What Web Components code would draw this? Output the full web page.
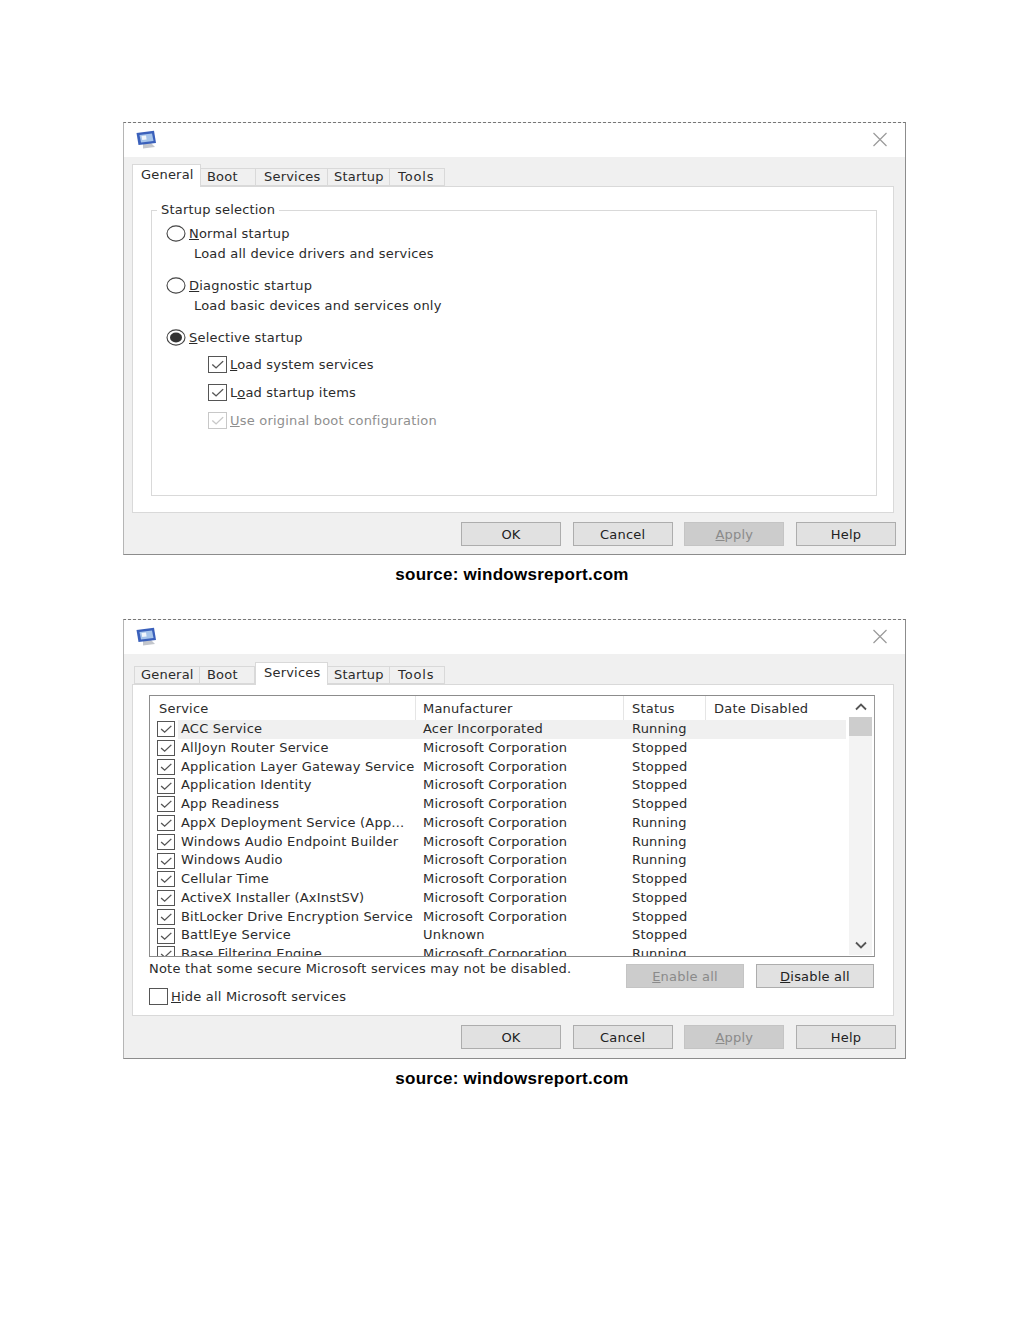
<!DOCTYPE html>
<html>
<head>
<meta charset="utf-8">
<title>System Configuration</title>
<style>
  html, body { margin: 0; background: #fff; }
  body { font-family: 'DejaVu Sans', sans-serif; font-size: 13px; letter-spacing: .2px; color: #2b2b2b; }
</style>
</head>
<body>
<config-page>
  <config-dialog active="General" style="--panel-h: 327px; --tabs-top: 7px;">
    <general-panel></general-panel>
  </config-dialog>
  <source-note></source-note>
  <config-dialog active="Services" style="--panel-h: 332px; --tabs-top: 8px; --foot-pad: 9px 9px 9px; --tabs-pad: 0 0 0 2px;">
    <services-panel></services-panel>
  </config-dialog>
  <source-note></source-note>
</config-page>

<script>
const CHECK_MARK = '<path d="M3.5 9 L7.5 13 L15 5" fill="none" stroke="currentColor" stroke-width="1.5"/>';

class ConfigPage extends HTMLElement {
  constructor() {
    super();
    this.attachShadow({ mode: 'open' });
    this.shadowRoot.innerHTML = `
      <style>
        :host { display: block; width: 1024px; height: 1325px; padding: 122px 118px 0 123px; box-sizing: border-box; }
      </style>
      <slot></slot>
    `;
  }
}

class SourceNote extends HTMLElement {
  constructor() {
    super();
    this.attachShadow({ mode: 'open' });
    this.shadowRoot.innerHTML = `
      <style>
        :host {
          display: block;
          height: 64px;
          padding-top: 10px;
          box-sizing: border-box;
          text-align: center;
          font: bold 17px/20px 'Liberation Sans', Arial, sans-serif;
          letter-spacing: .27px;
          color: #000;
          margin-right: 5px;
        }
      </style>
      source: windowsreport.com
    `;
  }
}

class ConfigDialog extends HTMLElement {
  constructor() {
    super();
    this.attachShadow({ mode: 'open' });
    const active = this.getAttribute('active');
    const tabs = ['General', 'Boot', 'Services', 'Startup', 'Tools'].map(name =>
      `<div class="tab tab-${name} ${name === active ? 'on' : ''}">${name}</div>`).join('');
    this.shadowRoot.innerHTML = `
      <style>
        :host {
          display: block;
          background: #f0f0f0;
          border: 1px solid #8c8c8c;
          border-left-color: #b5b5b5;
          border-top: 1px dashed #777;
          box-sizing: border-box;
          width: 783px;
        }
        .title {
          height: 34px;
          background: #fff;
          display: flex;
          align-items: center;
          justify-content: space-between;
          padding: 0 17px 1px 11px;
          box-sizing: border-box;
        }
        .tabs {
          display: flex;
          align-items: flex-end;
          height: 22px;
          margin-top: var(--tabs-top, 8px);
          padding: var(--tabs-pad, 0);
          margin-left: 8px;
          position: relative;
          z-index: 1;
        }
        .tab {
          height: 18px;
          line-height: 16px;
          box-sizing: border-box;
          background: #f0f0f0;
          border: 1px solid #d9d9d9;
          border-left: 0;
          border-bottom-color: #d9d9d9;
          padding-left: 7px;
          white-space: nowrap;
        }
        .tab-General { width: 66px; border-left: 1px solid #d9d9d9; padding-left: 6px; }
        .tab-Boot { width: 55px; }
        .on + .tab-Boot { padding-left: 6px; }
        .tab-Services { width: 72px; padding-left: 8px; }
        .tab-Startup { width: 62px; padding-left: 6px; }
        .tab-Tools { width: 55px; padding-left: 8px; letter-spacing: .9px; }
        .tab.on {
          height: 23px;
          margin-bottom: -1px;
          line-height: 19px;
          background: #fff;
          border-bottom: 0;
          border-top: 1px solid #d9d9d9;
          border-left: 1px solid #d9d9d9;
        }
        .tab-General.on { width: 69px; padding-left: 8px; }
        .tab-Services.on { width: 73px; }
        .panel {
          margin: 0 11px 0 8px;
          height: var(--panel-h);
          background: #fff;
          border: 1px solid #d9d9d9;
          box-sizing: border-box;
        }
        .foot {
          display: flex;
          justify-content: flex-end;
          gap: 11.67px;
          padding: var(--foot-pad, 9px 9px 8px);
          --btn-w: 100px;
        }
      </style>
      <div class="title">
        <svg width="23" height="19" viewBox="0 0 23 19">
          <path d="M8 14 L16 13 L20 17 L8 18.5 Z" fill="#c3c6cc"/>
          <path d="M1.5 3 L19 0.8 L21 13 L3.5 15 Z" fill="#3a60bb"/>
          <path d="M4.5 5 L17 3.4 L18.5 11 L6 12.6 Z" fill="#a6c4ea"/>
          <path d="M6.5 6 L11 5.4 L11.6 9.4 L7.2 10 Z" fill="#f0f5fb"/>
        </svg>
        <svg width="16" height="15" viewBox="0 0 16 15">
          <path d="M1.5 1 L14.5 14 M14.5 1 L1.5 14" stroke="#9a9a9a" stroke-width="1.2" fill="none"/>
        </svg>
      </div>
      <div class="tabs">${tabs}</div>
      <div class="panel"><slot></slot></div>
      <div class="foot">
        <push-btn>OK</push-btn>
        <push-btn>Cancel</push-btn>
        <push-btn disabled><u>A</u>pply</push-btn>
        <push-btn>Help</push-btn>
      </div>
    `;
  }
}

class PushBtn extends HTMLElement {
  constructor() {
    super();
    this.attachShadow({ mode: 'open' });
    this.shadowRoot.innerHTML = `
      <style>
        :host {
          display: block;
          width: var(--btn-w, 101px);
          height: 24px;
          box-sizing: border-box;
          background: #e1e1e1;
          border: 1px solid #adadad;
          text-align: center;
          line-height: 24px;
          color: #222;
        }
        :host([disabled]) {
          background: #cccccc;
          border-color: #c4c4c4;
          color: #8a8a8a;
        }
      </style>
      <slot></slot>
    `;
  }
}

class TickBox extends HTMLElement {
  constructor() {
    super();
    this.attachShadow({ mode: 'open' });
    this.shadowRoot.innerHTML = `
      <style>
        :host {
          display: block;
          flex: none;
          width: 19px;
          height: 17px;
          box-sizing: border-box;
          border: 1px solid #555;
          color: #555;
          background: #fff;
        }
        :host([disabled]) { border-color: #c8c8c8; color: #c8c8c8; }
        svg { display: block; width: 100%; height: 100%; }
      </style>
      <svg viewBox="0 0 18 18" preserveAspectRatio="none">
        ${this.hasAttribute('off') ? '' : CHECK_MARK}
      </svg>
    `;
  }
}

class OptionRow extends HTMLElement {
  constructor() {
    super();
    this.attachShadow({ mode: 'open' });
    const kind = this.getAttribute('kind');
    const off = this.hasAttribute('off') ? 'off' : '';
    const disabled = this.hasAttribute('disabled') ? 'disabled' : '';
    let mark = `<tick-box ${off} ${disabled}></tick-box>`;
    if (kind === 'radio') {
      mark = `<svg width="20" height="17" viewBox="0 0 20 17">
        <ellipse cx="10" cy="8.5" rx="9" ry="7.6" fill="#fff" stroke="#444" stroke-width="1.1"/>
        ${this.hasAttribute('selected') ? '<ellipse cx="10" cy="8.5" rx="6" ry="5" fill="#333"/>' : ''}
      </svg>`;
    }
    this.shadowRoot.innerHTML = `
      <style>
        :host { display: flex; align-items: center; gap: 3px; height: 18px; white-space: nowrap; }
        :host([disabled]) { color: #8f8f8f; }
        svg { flex: none; }
      </style>
      ${mark}
      <span><slot></slot></span>
    `;
  }
}

class GeneralPanel extends HTMLElement {
  constructor() {
    super();
    this.attachShadow({ mode: 'open' });
    this.shadowRoot.innerHTML = `
      <style>
        :host { display: block; padding: 23px 16px 0 18px; }
        .group {
          position: relative;
          height: 286px;
          box-sizing: border-box;
          border: 1px solid #d9d9d9;
          padding: 13px 0 0 14px;
        }
        .legend {
          position: absolute;
          top: -9px;
          left: 5px;
          padding: 0 4px;
          line-height: 16px;
          background: #fff;
        }
        .desc { margin: 3px 0 0 28px; height: 18px; line-height: 18px; }
        .sub { margin-left: 42px; display: flex; flex-direction: column; gap: 10px; margin-top: 9px; }
        .next { margin-top: 13px; }
      </style>
      <div class="group">
        <div class="legend">Startup selection</div>
        <option-row kind="radio"><u>N</u>ormal startup</option-row>
        <div class="desc">Load all device drivers and services</div>
        <option-row class="next" kind="radio"><u>D</u>iagnostic startup</option-row>
        <div class="desc">Load basic devices and services only</div>
        <option-row class="next" kind="radio" selected><u>S</u>elective startup</option-row>
        <div class="sub">
          <option-row><u>L</u>oad system services</option-row>
          <option-row>L<u>o</u>ad startup items</option-row>
          <option-row disabled><u>U</u>se original boot configuration</option-row>
        </div>
      </div>
    `;
  }
}

class ServiceList extends HTMLElement {
  constructor() {
    super();
    this.attachShadow({ mode: 'open' });
    const ms = 'Microsoft Corporation';
    const rows = [
      ['ACC Service', 'Acer Incorporated', 'Running'],
      ['AllJoyn Router Service', ms, 'Stopped'],
      ['Application Layer Gateway Service', ms, 'Stopped'],
      ['Application Identity', ms, 'Stopped'],
      ['App Readiness', ms, 'Stopped'],
      ['AppX Deployment Service (App\u2026', ms, 'Running'],
      ['Windows Audio Endpoint Builder', ms, 'Running'],
      ['Windows Audio', ms, 'Running'],
      ['Cellular Time', ms, 'Stopped'],
      ['ActiveX Installer (AxInstSV)', ms, 'Stopped'],
      ['BitLocker Drive Encryption Service', ms, 'Stopped'],
      ['BattlEye Service', 'Unknown', 'Stopped'],
      ['Base Filtering Engine', ms, 'Running']
    ];
    const body = rows.map((r, i) => `
      <div class="row ${i === 0 ? 'first' : ''}">
        <tick-box></tick-box>
        <span class="name">${r[0]}</span>
        <span>${r[1]}</span>
        <span>${r[2]}</span>
      </div>`).join('');
    this.shadowRoot.innerHTML = `
      <style>
        :host {
          display: flex;
          height: 262px;
          box-sizing: border-box;
          border: 1px solid #8c8c8c;
          border-right-color: #9a9a9a;
          background: #fff;
          overflow: hidden;
        }
        .list { width: 696px; flex: none; overflow: hidden; }
        .head {
          display: grid;
          grid-template-columns: 266px 208px 82px 140px;
          height: 24px;
          line-height: 25px;
          box-sizing: border-box;
        }
        .head span { padding-left: 7px; border-right: 1px solid #e5e5e5; }
        .head span:first-child { padding-left: 9px; }
        .head span:nth-child(n+3) { padding-left: 8px; }
        .head span:last-child { border-right: 0; }
        .row {
          display: grid;
          grid-template-columns: 24px 242px 209px 1fr;
          height: 18.75px;
          line-height: 18.75px;
          white-space: nowrap;
          align-items: center;
          position: relative;
          padding-left: 7px;
          box-sizing: border-box;
          width: 696px;
        }
        .row tick-box { width: 18px; height: 16px; }
        .row.first { background: linear-gradient(to right, #fff 28px, #f0f0f0 28px); }
        .bar {
          width: 23px;
          margin-left: 3px;
          background: #f3f3f3;
          display: flex;
          flex-direction: column;
          justify-content: space-between;
          margin-bottom: 1px;
        }
        .thumb { height: 19px; background: #cdcdcd; }
        .arrow { height: 21px; display: flex; align-items: center; justify-content: center; background: #f3f3f3; }
        .up { background: #fff; }
        .top { display: flex; flex-direction: column; }
      </style>
      <div class="list">
        <div class="head"><span>Service</span><span>Manufacturer</span><span>Status</span><span>Date Disabled</span></div>
        ${body}
      </div>
      <div class="bar">
        <div class="top">
          <div class="arrow up"><svg width="12" height="8" viewBox="0 0 12 8"><path d="M1 6.5 L6 1.5 L11 6.5" fill="none" stroke="#555" stroke-width="1.8"/></svg></div>
          <div class="thumb"></div>
        </div>
        <div class="arrow"><svg width="12" height="8" viewBox="0 0 12 8"><path d="M1 1.5 L6 6.5 L11 1.5" fill="none" stroke="#555" stroke-width="1.8"/></svg></div>
      </div>
    `;
  }
}

class ServicesPanel extends HTMLElement {
  constructor() {
    super();
    this.attachShadow({ mode: 'open' });
    this.shadowRoot.innerHTML = `
      <style>
        :host { display: block; padding: 10px 18px 0 16px; --btn-w: 118px; }
        .below { display: flex; justify-content: space-between; margin-top: 7px; }
        .note { line-height: 18px; margin-top: -4px; }
        .hide { margin-top: 9px; }
        .btns { display: flex; gap: 12px; margin-right: 1px; }
      </style>
      <service-list></service-list>
      <div class="below">
        <div>
          <div class="note">Note that some secure Microsoft services may not be disabled.</div>
          <option-row class="hide" off><u>H</u>ide all Microsoft services</option-row>
        </div>
        <div class="btns">
          <push-btn disabled><u>E</u>nable all</push-btn>
          <push-btn><u>D</u>isable all</push-btn>
        </div>
      </div>
    `;
  }
}

customElements.define('config-page', ConfigPage);
customElements.define('source-note', SourceNote);
customElements.define('push-btn', PushBtn);
customElements.define('tick-box', TickBox);
customElements.define('option-row', OptionRow);
customElements.define('general-panel', GeneralPanel);
customElements.define('service-list', ServiceList);
customElements.define('services-panel', ServicesPanel);
customElements.define('config-dialog', ConfigDialog);
</script>
</body>
</html>
